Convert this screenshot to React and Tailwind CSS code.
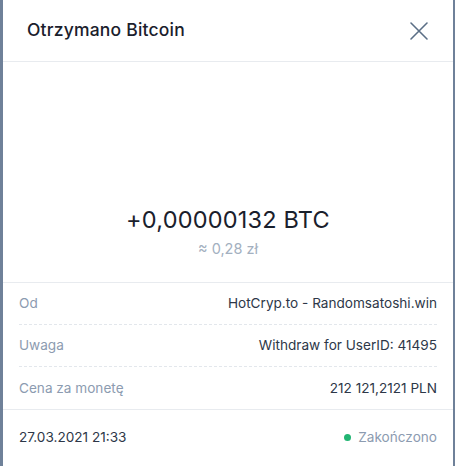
export default function App() {
  const rows = [
    ["Od", "HotCryp.to - Randomsatoshi.win"],
    ["Uwaga", "Withdraw for UserID: 41495"],
    ["Cena za monetę", "212 121,2121 PLN"],
  ];
  return (
    <div
      className="w-[455px] h-[466px] bg-[#6f8199] flex pl-[3px] pr-[2px] overflow-hidden"
      style={{ fontFamily: "Inter, 'Noto Sans', sans-serif" }}
    >
      <div className="flex-1 bg-white flex flex-col">
        <div className="h-[62px] border-b border-[#e8ebef] flex items-center justify-between pl-[24px] pr-[24px]">
          <span className="text-[17.5px] font-medium text-[#1a202c] tracking-[0.2px]">Otrzymano Bitcoin</span>
          <svg width="20" height="20" viewBox="0 0 20 20" className="text-[#5b6f86]">
            <path d="M2 2L18 18M18 2L2 18" stroke="currentColor" strokeWidth="1.6" strokeLinecap="round" />
          </svg>
        </div>
        <div className="h-[221px] border-b border-[#e8ebef] flex flex-col items-center justify-end pb-[23px]">
          <div className="text-[23.5px] text-[#1a202c] leading-[30px] tracking-[0.2px]">+0,00000132 BTC</div>
          <div className="text-[14.5px] text-[#a3b0c0] leading-[20px] mt-[4px]">≈ 0,28 zł</div>
        </div>
        <div className="px-[16px] border-b border-[#e8ebef]">
          {rows.map(([k, v], i) => (
            <div
              key={k}
              className={`h-[42px] flex items-center justify-between text-[13.6px] ${i < rows.length - 1 ? "border-b border-dashed border-[#e3e7ec]" : ""}`}
            >
              <span className="text-[#8c9bb0]">{k}</span>
              <span className="text-[#2d3748]">{v}</span>
            </div>
          ))}
        </div>
        <div className="flex-1 px-[16px] flex items-start justify-between pt-[17px] text-[13.6px]">
          <span className="text-[#2d3748] leading-[20px]">27.03.2021 21:33</span>
          <span className="flex items-center gap-[7px] text-[#8c9bb0] leading-[20px]">
            <span className="w-[7px] h-[7px] rounded-full bg-[#22b573]" />
            Zakończono
          </span>
        </div>
      </div>
    </div>
  );
}
